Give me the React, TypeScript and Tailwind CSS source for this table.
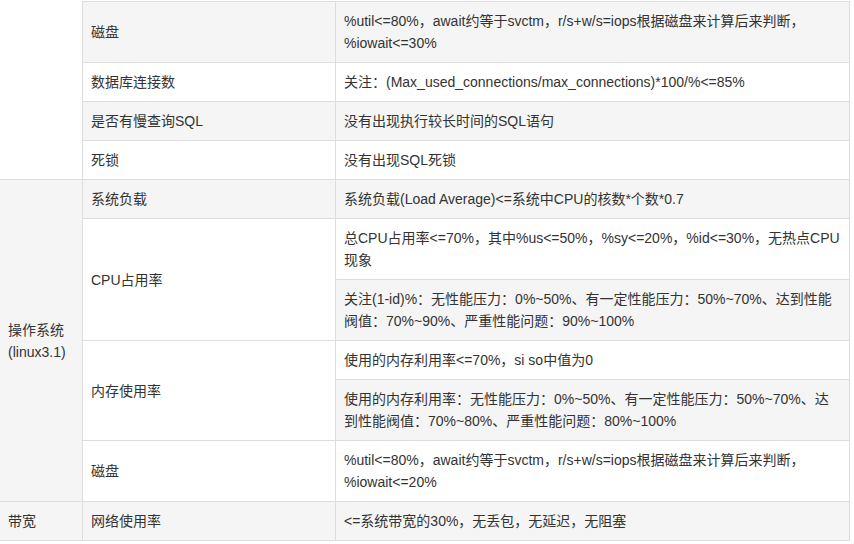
const cell = 'px-2 py-2 align-middle border-b border-r border-[#dddddd] leading-[22px]';

type Row = {
  group?: { text: string; span: number; top?: boolean };
  item?: { text: string; span: number };
  value: string[];
};

const rows: Row[] = [
  {
    group: { text: '', span: 4, top: true },
    item: { text: '磁盘', span: 1 },
    value: ['%util<=80%，await约等于svctm，r/s+w/s=iops根据磁盘来计算后来判断，', '%iowait<=30%'],
  },
  { item: { text: '数据库连接数', span: 1 }, value: ['关注：(Max_used_connections/max_connections)*100/%<=85%'] },
  { item: { text: '是否有慢查询SQL', span: 1 }, value: ['没有出现执行较长时间的SQL语句'] },
  { item: { text: '死锁', span: 1 }, value: ['没有出现SQL死锁'] },
  {
    group: { text: '操作系统(linux3.1)', span: 6 },
    item: { text: '系统负载', span: 1 },
    value: ['系统负载(Load Average)<=系统中CPU的核数*个数*0.7'],
  },
  {
    item: { text: 'CPU占用率', span: 2 },
    value: ['总CPU占用率<=70%，其中%us<=50%，%sy<=20%，%id<=30%，无热点CPU', '现象'],
  },
  { value: ['关注(1-id)%：无性能压力：0%~50%、有一定性能压力：50%~70%、达到性能', '阀值：70%~90%、严重性能问题：90%~100%'] },
  { item: { text: '内存使用率', span: 2 }, value: ['使用的内存利用率<=70%，si so中值为0'] },
  { value: ['使用的内存利用率：无性能压力：0%~50%、有一定性能压力：50%~70%、达', '到性能阀值：70%~80%、严重性能问题：80%~100%'] },
  {
    item: { text: '磁盘', span: 1 },
    value: ['%util<=80%，await约等于svctm，r/s+w/s=iops根据磁盘来计算后来判断，', '%iowait<=20%'],
  },
  { group: { text: '带宽', span: 1 }, item: { text: '网络使用率', span: 1 }, value: ['<=系统带宽的30%，无丢包，无延迟，无阻塞'] },
];

export default function App() {
  return (
    <div
      className="w-[854px] h-[544px] bg-white pt-px text-[14px] text-[#333333] overflow-hidden"
      style={{ fontFamily: '"Liberation Sans", "Noto Sans CJK SC", sans-serif' }}
    >
      <table className="table-fixed border-separate border-spacing-0 w-[850px]">
        <colgroup>
          <col className="w-[83px]" />
          <col className="w-[253px]" />
          <col className="w-[514px]" />
        </colgroup>
        <tbody>
          {rows.map((row, i) => {
            const bg = i % 2 === 0 ? 'bg-[#f5f5f5]' : 'bg-white';
            return (
              <tr key={i}>
                {row.group && (
                  <td
                    rowSpan={row.group.span}
                    className={`${cell} ${row.group.top ? 'bg-white' : bg}`}
                  >
                    {row.group.text}
                  </td>
                )}
                {row.item && (
                  <td rowSpan={row.item.span} className={`${cell} ${bg} ${i === 0 ? 'border-t' : ''}`}>
                    {row.item.text}
                  </td>
                )}
                <td className={`${cell} ${bg} whitespace-nowrap ${i === 0 ? 'border-t' : ''}`}>
                  {row.value.map((line, j) => (
                    <div key={j}>{line}</div>
                  ))}
                </td>
              </tr>
            );
          })}
        </tbody>
      </table>
    </div>
  );
}
